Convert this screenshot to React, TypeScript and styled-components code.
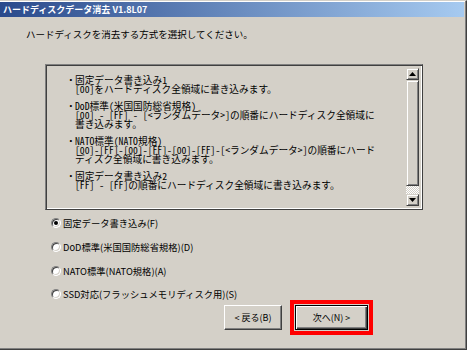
import React from "react";
import styled, { createGlobalStyle } from "styled-components";

const GlobalStyle = createGlobalStyle`
  html, body {
    margin: 0;
    padding: 0;
    background: #ffffff;
  }
  body {
    font-family: "Noto Sans CJK JP", "DejaVu Sans", sans-serif;
    font-size: 9px;
    color: #000;
  }
`;

const methods = [
  { label: "固定データ書き込み(F)", checked: true },
  { label: "DoD標準(米国国防総省規格)(D)", checked: false },
  { label: "NATO標準(NATO規格)(A)", checked: false },
  { label: "SSD対応(フラッシュメモリディスク用)(S)", checked: false },
];

const descriptions = [
  {
    title: "固定データ書き込み1",
    lines: ["[00]をハードディスク全領域に書き込みます。"],
  },
  {
    title: "DoD標準(米国国防総省規格)",
    lines: [
      "[00] - [FF] - [<ランダムデータ>]の順番にハードディスク全領域に",
      "書き込みます。",
    ],
  },
  {
    title: "NATO標準(NATO規格)",
    lines: [
      "[00]-[FF]-[00]-[FF]-[00]-[FF]-[<ランダムデータ>]の順番にハード",
      "ディスク全領域に書き込みます。",
    ],
  },
  {
    title: "固定データ書き込み2",
    lines: ["[FF] - [FF]の順番にハードディスク全領域に書き込みます。"],
  },
];

const Arrow: React.FC<{ down?: boolean }> = ({ down }) => (
  <svg width="7" height="4" viewBox="0 0 7 4">
    <polygon points={down ? "0,0 7,0 3.5,4" : "0,4 7,4 3.5,0"} fill="#000" />
  </svg>
);

const App: React.FC = () => {
  return (
    <>
      <GlobalStyle />
      <Window>
        <TitleBar>ハードディスクデータ消去 V1.8L07</TitleBar>
        <Prompt>ハードディスクを消去する方式を選択してください。</Prompt>
        <ListBox>
          <ListText>
            {descriptions.map((d) => (
              <Entry key={d.title}>
                <TextLine>
                  <Bullet>・</Bullet>
                  {d.title}
                </TextLine>
                {d.lines.map((l) => (
                  <TextLine key={l}>{l}</TextLine>
                ))}
              </Entry>
            ))}
          </ListText>
          <ScrollBar>
            <ScrollButton>
              <Arrow />
            </ScrollButton>
            <Thumb />
            <Track />
            <ScrollButton>
              <Arrow down />
            </ScrollButton>
          </ScrollBar>
        </ListBox>
        <RadioGroup>
          {methods.map((m) => (
            <RadioRow key={m.label}>
              <RadioCircle $checked={m.checked} />
              <RadioLabel>{m.label}</RadioLabel>
            </RadioRow>
          ))}
        </RadioGroup>
        <Footer>
          <Button>&lt; 戻る(B)</Button>
          <Highlight>
            <Button $default>次へ(N) &gt;</Button>
          </Highlight>
        </Footer>
      </Window>
    </>
  );
};

export default App;

const Window = styled.div`
  box-sizing: border-box;
  width: 467px;
  height: 350px;
  background: #d4d0c8;
  border-top: 1px solid #d4d0c8;
  border-right: 1px solid #404040;
  border-bottom: 1px solid #404040;
  box-shadow: inset -1px -1px 0 #808080, inset 0 1px 0 #ffffff;
  display: flex;
  flex-direction: column;
  padding: 1px 2px 0 0;
`;

const TitleBar = styled.div`
  height: 15px;
  line-height: 15px;
  padding-left: 3px;
  background: linear-gradient(to right, #2a4a8c, #a6caf0);
  color: #ffffff;
  font-weight: bold;
  font-size: 9px;
  white-space: nowrap;
`;

const Prompt = styled.div`
  margin: 11px 0 0 26px;
  line-height: 12px;
  font-size: 9.5px;
`;

const ListBox = styled.div`
  box-sizing: border-box;
  display: flex;
  width: 378px;
  height: 146px;
  margin: 24px 0 0 45px;
  border: 1px solid;
  border-color: #808080 #404040 #404040 #808080;
  box-shadow: inset 1px 1px 0 #404040, inset -1px -1px 0 #ffffff;
`;

const ListText = styled.div`
  flex: 1;
  padding: 11px 0 0 29px;
  overflow: hidden;
  /* fixed-pitch look: half-width latin glyphs */
  font-feature-settings: "hwid" 1;
`;

const Entry = styled.div`
  margin-bottom: 8px;
`;

const TextLine = styled.div`
  line-height: 9px;
  font-size: 9.7px;
  white-space: nowrap;
`;

const Bullet = styled.span`
  display: inline-block;
  width: 9px;
  margin-left: -9px;
`;

const ScrollBar = styled.div`
  display: flex;
  flex-direction: column;
  width: 13px;
  margin: 3px 3px 3px 0;
`;

const raised = `
  box-sizing: border-box;
  background: #d4d0c8;
  border: 1px solid;
  border-color: #d4d0c8 #404040 #404040 #d4d0c8;
  box-shadow: inset 1px 1px 0 #ffffff, inset -1px -1px 0 #808080;
`;

const ScrollButton = styled.div`
  ${raised}
  height: 12px;
  display: flex;
  align-items: center;
  justify-content: center;
`;

const Thumb = styled.div`
  ${raised}
  height: 106px;
`;

const Track = styled.div`
  flex: 1;
  background: repeating-conic-gradient(#ffffff 0 25%, #d4d0c8 0 50%) 0 0 / 2px 2px;
`;

const RadioGroup = styled.div`
  display: flex;
  flex-direction: column;
  gap: 11.8px;
  margin: 7px 0 0 51px;
`;

const RadioRow = styled.div`
  display: flex;
  align-items: center;
  height: 12px;
`;

const RadioCircle = styled.span<{ $checked: boolean }>`
  box-sizing: border-box;
  width: 10px;
  height: 10px;
  border-radius: 50%;
  border: 1px solid;
  border-color: #808080 #ffffff #ffffff #808080;
  box-shadow: inset 1px 1px 0 #404040, inset -1px -1px 0 #d4d0c8;
  background: #ffffff;
  display: flex;
  align-items: center;
  justify-content: center;

  &::after {
    content: "";
    width: 4px;
    height: 4px;
    border-radius: 50%;
    background: ${(p) => (p.$checked ? "#000" : "transparent")};
  }
`;

const RadioLabel = styled.span`
  margin-left: 2px;
  font-size: 9.3px;
  line-height: 12px;
  white-space: nowrap;
`;

const Footer = styled.div`
  display: flex;
  justify-content: flex-end;
  align-items: center;
  gap: 8px;
  margin: 0 91px 0 0;
`;

const Highlight = styled.div`
  border: 4px solid #ff0000;
  padding: 1px;
  display: flex;
`;

const Button = styled.div<{ $default?: boolean }>`
  box-sizing: border-box;
  height: 25px;
  width: ${(p) => (p.$default ? "73px" : "58px")};
  display: flex;
  align-items: center;
  justify-content: center;
  font-size: 9px;
  background: #d4d0c8;
  border: 1px solid;
  border-color: ${(p) =>
    p.$default ? "#000000" : "#ffffff #404040 #404040 #ffffff"};
  box-shadow: ${(p) =>
    p.$default
      ? "inset 1px 1px 0 #ffffff, inset -1px -1px 0 #404040, inset -2px -2px 0 #808080"
      : "inset -1px -1px 0 #808080"};
  white-space: nowrap;
`;
